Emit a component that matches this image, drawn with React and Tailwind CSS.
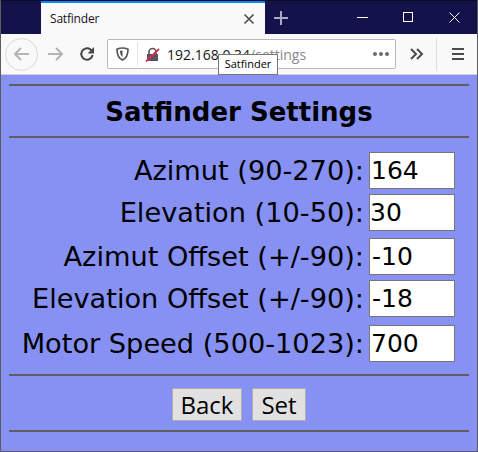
const rows = [
  { label: "Azimut (90-270):", value: "164", mb: "mb-[5px]", pl: "pl-[1px]" },
  { label: "Elevation (10-50):", value: "30", mb: "mb-[7px]", pl: "pl-0" },
  { label: "Azimut Offset (+/-90):", value: "-10", mb: "mb-[5px]", pl: "pl-[2px]" },
  { label: "Elevation Offset (+/-90):", value: "-18", mb: "mb-[8px]", pl: "pl-[2px]" },
  { label: "Motor Speed (500-1023):", value: "700", mb: "mb-0", pl: "pl-[1px]" },
];

function TabBar() {
  return (
    <div className="flex h-[34px] bg-[#14124a] border-t border-[#0c0b26]">
      <div className="w-[40px]" />
      <div className="w-[224px] h-[33px] bg-[#f9f9fa] border-t-2 border-[#0a84ff] flex items-center pl-[9px] pr-[10px] justify-between">
        <span className="text-[12px] text-[#15141a] font-['Open_Sans',sans-serif] tracking-[-0.2px]">Satfinder</span>
        <svg width="12" height="12" viewBox="0 0 12 12" stroke="#4a4a4f" strokeWidth="1.6" fill="none">
          <path d="M1.5 1.5l9 9M10.5 1.5l-9 9" />
        </svg>
      </div>
      <div className="w-[32px] flex items-center justify-center">
        <svg width="16" height="16" viewBox="0 0 16 16" stroke="#a9a9c0" strokeWidth="2" fill="none">
          <path d="M8 1v14M1 8h14" />
        </svg>
      </div>
      <div className="flex-1 flex justify-end items-center text-white">
        <div className="w-[46px] flex justify-center">
          <svg width="11" height="11" viewBox="0 0 11 11" stroke="#fff" fill="none"><path d="M0 5.5h11" /></svg>
        </div>
        <div className="w-[46px] flex justify-center">
          <svg width="11" height="11" viewBox="0 0 11 11" stroke="#fff" fill="none"><rect x="0.5" y="0.5" width="9" height="9" /></svg>
        </div>
        <div className="w-[46px] flex justify-center">
          <svg width="11" height="11" viewBox="0 0 11 11" stroke="#fff" fill="none"><path d="M0.5 0.5l10 10M10.5 0.5l-10 10" /></svg>
        </div>
      </div>
    </div>
  );
}

function ToolBar() {
  return (
    <div className="relative flex items-center h-[41px] bg-[#f9f9fa] border-b border-[#d0d0d2]">
      <div className="ml-[4px] w-[33px] h-[33px] rounded-full border border-[#d8d8da] flex items-center justify-center">
        <svg width="18" height="16" viewBox="0 0 18 16" stroke="#b4b4b6" strokeWidth="2" fill="none">
          <path d="M16 8H2M8 2L2 8l6 6" />
        </svg>
      </div>
      <svg className="ml-[8px]" width="18" height="16" viewBox="0 0 18 16" stroke="#b4b4b6" strokeWidth="2" fill="none">
        <path d="M2 8h14M10 2l6 6-6 6" />
      </svg>
      <svg className="ml-[15px]" width="16" height="16" viewBox="0 0 16 16" fill="none">
        <path d="M13.6 9A5.7 5.7 0 1 1 11.4 3.4L13 5" stroke="#46464a" strokeWidth="2" />
        <path d="M15 1v6.5H8.5z" fill="#46464a" />
      </svg>
      <div className="ml-[12px] w-[289px] h-[30px] bg-white border border-[#b9b9bb] rounded-[2px] flex items-center">
        <div className="w-[29px] flex justify-center">
          <svg width="13" height="14" viewBox="0 0 13 14" fill="none">
            <path d="M6.5 1C4.5 1 2.5 1.5 1 2.2c0 5 1.2 8.8 5.5 10.8 4.3-2 5.5-5.8 5.5-10.8C10.5 1.5 8.5 1 6.5 1z" stroke="#55555a" strokeWidth="1.7" />
            <path d="M6.5 3.5c-.9 0-1.7.1-2.6.4.1 2.6.9 4.8 2.6 6.1z" fill="#55555a" />
          </svg>
        </div>
        <div className="w-px h-[24px] bg-[#e2e2e4]" />
        <svg className="ml-[7px]" width="15" height="15" viewBox="0 0 15 15" fill="none">
          <path d="M4 7V5a3.5 3.5 0 0 1 7 0v2" stroke="#55555a" strokeWidth="1.6" />
          <path d="M2 7h11v7H2z" fill="#55555a" />
          <path d="M1 14.5L14 2" stroke="#e22850" strokeWidth="1.8" />
        </svg>
        <span className="ml-[7px] text-[14px] whitespace-nowrap font-['Open_Sans',sans-serif] text-[#15141a]">
          192.168.0.34<span className="text-[#8a8a90]">/settings</span>
        </span>
        <span className="ml-auto mr-[6px] flex gap-[2px]">
          <i className="w-[4px] h-[4px] rounded-full bg-[#6a6a6e]" />
          <i className="w-[4px] h-[4px] rounded-full bg-[#6a6a6e]" />
          <i className="w-[4px] h-[4px] rounded-full bg-[#6a6a6e]" />
        </span>
      </div>
      <svg className="ml-[14px]" width="14" height="12" viewBox="0 0 14 12" stroke="#4a4a4f" strokeWidth="2" fill="none">
        <path d="M1 1l5 5-5 5M7 1l5 5-5 5" />
      </svg>
      <div className="ml-[12px] w-px h-[33px] bg-[#dcdcde]" />
      <div className="ml-[15px] w-[12px] flex flex-col gap-[3px]">
        <i className="h-[2px] bg-[#4a4a4f]" />
        <i className="h-[2px] bg-[#4a4a4f]" />
        <i className="h-[2px] bg-[#4a4a4f]" />
      </div>
      {/* tooltip over the address bar */}
      <div className="absolute left-[217px] top-[20px] w-[60px] h-[21px] bg-white border border-[#767676] flex items-center justify-center text-[11px] text-black font-['Open_Sans',sans-serif]">
        Satfinder
      </div>
    </div>
  );
}

export default function App() {
  return (
    <div className="w-[478px] h-[452px] flex flex-col overflow-hidden border-x border-b border-[#5c5c5c] font-['DejaVu_Sans',sans-serif]">
      <TabBar />
      <ToolBar />
      <main className="flex-1 bg-[#8791f4] px-[8px] pt-[9px]">
        <hr className="border-t-2 border-[#5f5f5f]" />
        <h1 className="h-[50px] flex items-center justify-center pt-[3px] text-[26px] font-bold text-black">Satfinder Settings</h1>
        <hr className="border-t-2 border-[#5f5f5f]" />
        <div className="pt-[14px] pb-[12px]">
          {rows.map((r) => (
            <div key={r.label} className={`flex justify-end items-center pr-[14px] ${r.mb}`}>
              <span className="text-[27.2px] leading-none text-black whitespace-nowrap">{r.label}</span>
              <input
                readOnly
                value={r.value}
                className={`ml-[5px] w-[86px] h-[37px] bg-white border border-[#767676] text-[25px] text-black outline-none ${r.pl}`}
              />
            </div>
          ))}
        </div>
        <hr className="border-t-2 border-[#5f5f5f]" />
        <div className="flex justify-center gap-[10px] pt-[12px] pb-[9px] font-['Open_Sans',sans-serif]">
          <button className="w-[70px] h-[33px] bg-[#e1e1e1] border border-[#adadad] text-[24px] leading-none text-black">Back</button>
          <button className="w-[54px] h-[33px] bg-[#e1e1e1] border border-[#adadad] text-[24px] leading-none text-black">Set</button>
        </div>
        <hr className="border-t-2 border-[#5f5f5f]" />
      </main>
    </div>
  );
}
